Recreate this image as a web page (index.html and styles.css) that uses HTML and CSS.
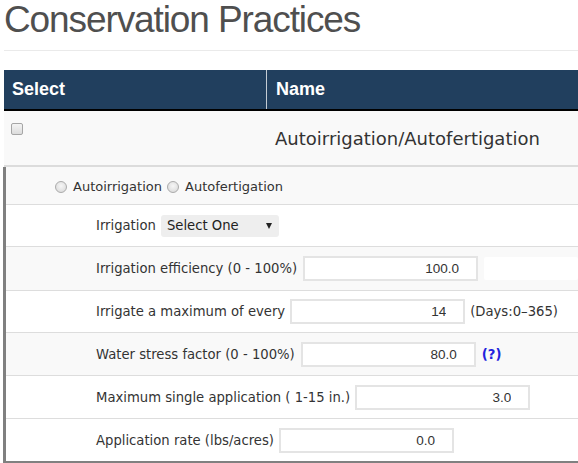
FILE: index.html
```html
<!DOCTYPE html>
<html>
<head>
<meta charset="utf-8">
<link rel="stylesheet" href="styles.css">
</head>
<body>
<div class="page">
  <h1 class="title">Conservation Practices</h1>
  <div class="rule"></div>
  <div class="table">
    <div class="thead">
      <div class="th th-select">Select</div>
      <div class="th th-name">Name</div>
    </div>
    <div class="row-main">
      <div class="cell-select"><span class="checkbox"></span></div>
      <div class="cell-name">Autoirrigation/Autofertigation</div>
    </div>
    <div class="detail">
      <div class="drow drow-radio">
        <span class="radio"></span><span class="radio-label">Autoirrigation</span>
        <span class="radio"></span><span class="radio-label">Autofertigation</span>
      </div>
      <div class="drow drow-irr">
        <span class="label">Irrigation</span>
        <div class="select"><span>Select One</span><span class="caret"></span></div>
      </div>
      <div class="drow drow-eff alt">
        <span class="label">Irrigation efficiency (0 - 100%)</span>
        <input class="field" type="text" value="100.0" readonly>
        <span class="blank"></span>
      </div>
      <div class="drow drow-max">
        <span class="label">Irrigate a maximum of every</span>
        <input class="field" type="text" value="14" readonly>
        <span class="note">(Days:0–365)</span>
      </div>
      <div class="drow drow-water alt">
        <span class="label">Water stress factor (0 - 100%)</span>
        <input class="field" type="text" value="80.0" readonly>
        <span class="help">(?)</span>
      </div>
      <div class="drow drow-single">
        <span class="label">Maximum single application ( 1-15 in.)</span>
        <input class="field" type="text" value="3.0" readonly>
      </div>
      <div class="drow drow-rate">
        <span class="label">Application rate (lbs/acres)</span>
        <input class="field" type="text" value="0.0" readonly>
      </div>
    </div>
  </div>
</div>
</body>
</html>
```

FILE: styles.css
```css
html, body {
  margin: 0;
  padding: 0;
  background: #fff;
  overflow: hidden;
}
.page {
  padding-left: 4px;
  font-family: "DejaVu Sans", Verdana, sans-serif;
  color: #333;
}
.title {
  margin: 0;
  font-family: "Liberation Sans", Arial, sans-serif;
  font-weight: normal;
  font-size: 37px;
  line-height: 40px;
  letter-spacing: -1.1px;
  color: #4f4f4f;
}
.rule {
  margin-top: 10px;
  height: 1px;
  background: #eaeaea;
}
.table {
  margin-top: 19px;
}
.thead {
  display: flex;
  height: 41px;
  box-sizing: border-box;
  background: #213f5e;
  border-bottom: 2px solid #000;
}
.th {
  font-family: "Liberation Sans", Arial, sans-serif;
  font-weight: bold;
  font-size: 18px;
  line-height: 39px;
  color: #fff;
}
.th-select {
  width: 263px;
  box-sizing: border-box;
  padding-left: 8px;
  border-right: 1px solid #c4ccd4;
}
.th-name {
  padding-left: 9px;
}
.row-main {
  display: flex;
  height: 56px;
  box-sizing: border-box;
  background: #f9f9f9;
  border-bottom: 2px solid #dcdcdc;
}
.cell-select {
  width: 263px;
  box-sizing: border-box;
  padding: 12px 0 0 7px;
}
.checkbox {
  display: block;
  width: 12px;
  height: 12px;
  box-sizing: border-box;
  border: 1px solid #a6a6a6;
  border-radius: 2px;
  background: linear-gradient(#f4f4f4, #dcdcdc);
}
.cell-name {
  display: flex;
  align-items: center;
  padding-left: 8px;
  font-size: 18px;
  color: #333;
}
.detail {
  margin-left: -1px;
  border-left: 3px solid #808080;
  border-bottom: 3px solid #808080;
}
.drow {
  display: flex;
  align-items: center;
  gap: 5px;
  box-sizing: border-box;
  padding-left: 90px;
  border-bottom: 1px solid #dddddd;
  font-size: 13.2px;
  background: #fff;
  white-space: nowrap;
}
.alt {
  background: #f9f9f9;
}
.drow-radio {
  height: 38px;
  padding-left: 49px;
  padding-top: 2px;
  gap: 0;
  font-size: 13px;
  background: #f9f9f9;
}
.radio {
  width: 12px;
  height: 12px;
  box-sizing: border-box;
  border: 1px solid #ababab;
  border-radius: 50%;
  background: radial-gradient(circle at 50% 40%, #f6f6f6, #d6d6d6);
  margin-right: 6px;
}
.radio-label {
  margin-right: 5px;
}
.drow-irr { height: 42px; }
.drow-eff { height: 44px; gap: 6px; }
.drow-max { height: 42px; }
.drow-water { height: 43px; gap: 6px; }
.drow-single { height: 43px; }
.drow-rate { height: 42px; border-bottom: none; }
.select {
  display: flex;
  align-items: center;
  justify-content: space-between;
  width: 118px;
  height: 22px;
  box-sizing: border-box;
  padding: 0 7px 0 6px;
  background: #eeeeee;
  border-radius: 3px;
  color: #222;
}
.caret {
  width: 0;
  height: 0;
  border-left: 3px solid transparent;
  border-right: 3px solid transparent;
  border-top: 6px solid #222;
}
.field {
  width: 175px;
  height: 25px;
  box-sizing: border-box;
  margin: 0;
  border: 2px solid #e4e4e4;
  padding: 0 17px 0 4px;
  background: #fff;
  font-family: "Liberation Sans", Arial, sans-serif;
  font-size: 13.5px;
  color: #333;
  text-align: right;
  outline: none;
}
.blank {
  width: 100px;
  height: 23px;
  background: #fff;
  border-radius: 2px;
}
.note {
  color: #333;
}
.help {
  font-weight: bold;
  color: #2222dd;
}
```
